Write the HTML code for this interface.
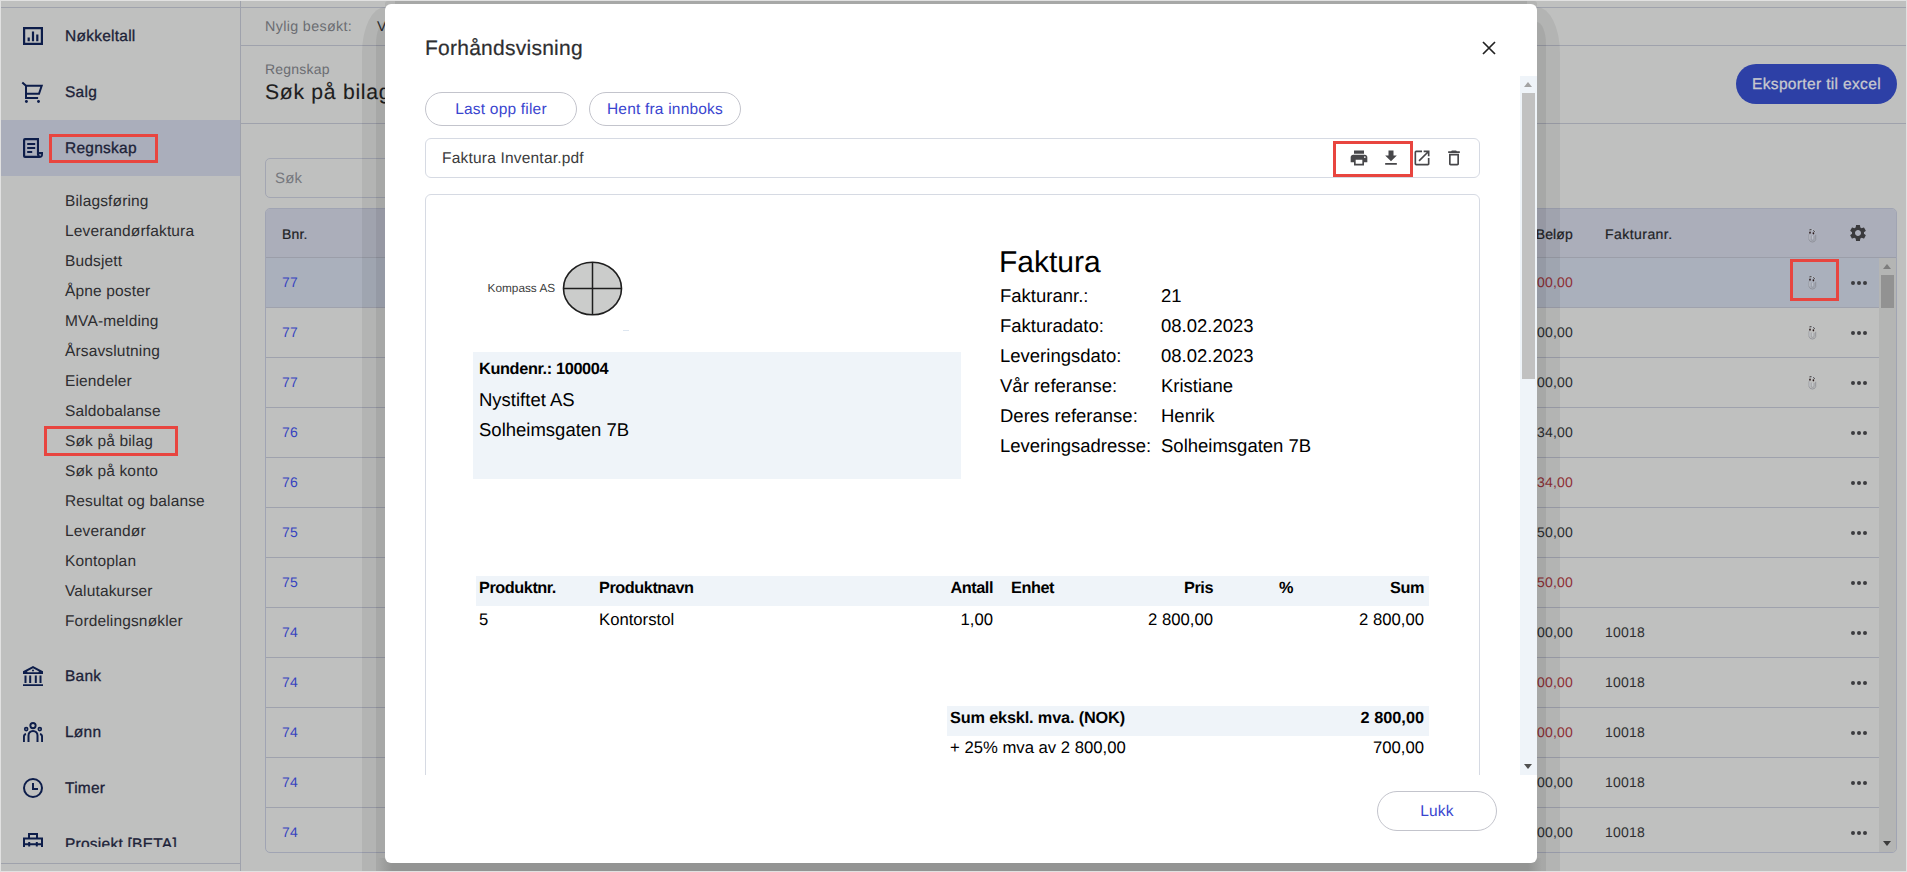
<!DOCTYPE html>
<html lang="no">
<head>
<meta charset="utf-8">
<title>Søk på bilag</title>
<style>
*{box-sizing:border-box;margin:0;padding:0}
html,body{width:1907px;height:872px;overflow:hidden}
body{text-rendering:geometricPrecision;position:relative;background:#bfc0bf;font-family:"Liberation Sans",sans-serif;color:#2a2a2c;font-size:15px}
.abs{position:absolute}
#frame{position:absolute;left:0;top:0;width:1907px;height:872px;border:1px solid #e1e1e1;z-index:50;pointer-events:none}
/* ---------- sidebar ---------- */
#side{position:absolute;left:1px;top:0;width:240px;height:871px;border-right:1px solid #9fa2ac}
#sidein{position:absolute;left:0;top:0;width:239px;height:847px;overflow:hidden}
.topline{position:absolute;left:1px;top:7px;width:1905px;height:1px;background:#9fa2ac}
.botline{position:absolute;left:1px;top:863px;width:240px;height:1px;background:#9fa2ac}
.nav{position:absolute;left:0;width:239px;height:56px}
.nav.on{background:#aaaebb}
.nav span{position:absolute;left:64px;top:19px;font-size:15.500px;line-height:20px;color:#1c2238;font-weight:400;letter-spacing:.25px;-webkit-text-stroke:.3px #1c2238;white-space:nowrap}
.nav svg{position:absolute;left:19px;top:16px;width:24px;height:24px;fill:#0d1d4a}
.sub{position:absolute;left:64px;font-size:15.500px;line-height:20px;color:#2d2d30;white-space:nowrap;letter-spacing:.15px}
.redbox{position:absolute;border:3px solid #e8453f}
/* ---------- main ---------- */
#main{position:absolute;left:241px;top:0;width:1665px;height:871px}
.hline{position:absolute;left:0;width:1665px;height:1px;background:#9fa2ac}
.recent{position:absolute;left:24px;top:18px;font-size:14.300px;line-height:18px;color:#6b6d72;letter-spacing:.35px;white-space:nowrap}
.crumb{position:absolute;left:24px;top:60px;font-size:14px;line-height:18px;color:#6b6d72;letter-spacing:.2px}
.h1{position:absolute;left:24px;top:80px;font-size:21.200px;line-height:26px;color:#1d1d20;letter-spacing:.7px;-webkit-text-stroke:.12px #1d1d20;white-space:nowrap}
.export{position:absolute;left:1495px;top:64px;width:161px;height:40px;border-radius:20px;background:#2d40a6;color:#c8c9cf;font-size:15.500px;line-height:42px;text-align:center;letter-spacing:.35px;-webkit-text-stroke:.3px #c8c9cf}
.search{position:absolute;left:24px;top:158px;width:300px;height:40px;border:1px solid #a3a6b2;border-radius:5px}
.search span{position:absolute;left:9px;top:10px;font-size:15px;line-height:20px;color:#76787e;letter-spacing:.2px}
/* table */
#tbl{position:absolute;left:24px;top:208px;width:1632px;height:645px;border:1px solid #a0a4b3;border-radius:5px;overflow:hidden}
.thead{position:absolute;left:0;top:0;width:1630px;height:49px;background:#abaeba;border-bottom:1px solid #9b9ea9}
.th{position:absolute;top:15px;font-size:14px;line-height:20px;color:#202124;-webkit-text-stroke:.2px #202124;letter-spacing:.15px}
.row{position:absolute;left:0;width:1613px;height:50px;border-bottom:1px solid #9fa2ad}
.row.hl{background:#aab0bc}
.row .b{position:absolute;left:16px;top:14px;font-size:14px;line-height:20px;color:#3643c0;letter-spacing:.2px}
.row .amt{white-space:nowrap;position:absolute;left:1207px;width:100px;text-align:right;top:14px;font-size:14px;line-height:20px;color:#2d2d30;letter-spacing:.2px}
.row .amt.neg{color:#8f2f36}
.row .f{position:absolute;left:1339px;top:14px;font-size:14px;line-height:20px;color:#2d2d30;letter-spacing:.2px}
.dots{position:absolute;left:1584.700px;top:22.800px;width:18px;height:6px}
.dots i{position:absolute;top:0;width:4.4px;height:4.4px;border-radius:50%;background:#3b3b3f}
.clip{position:absolute;left:1542.300px;top:16.500px;width:9px;height:15px}
.vscroll{position:absolute;left:1613px;top:49px;width:17px;height:594px;background:#b4b5b4}

.gear{position:absolute;left:1582px;top:14px;width:20px;height:20px;fill:#3a3a3d}
.vscroll .thumb{position:absolute;left:2px;top:17px;width:13px;height:33px;background:#929292}
.arr{position:absolute;left:4px;width:0;height:0;border-left:4.500px solid transparent;border-right:4.500px solid transparent}
.arr.up{top:6px;border-bottom:5px solid #7d7d7d}
.arr.down{bottom:6px;border-top:5px solid #3c3c3c}
#dl{position:absolute;left:0;top:0;width:1907px;height:872px}
.dtitle{position:absolute;left:425px;top:36px;font-size:21px;line-height:26px;color:#2e2e30;letter-spacing:.25px;-webkit-text-stroke:.2px #2e2e30;white-space:nowrap}
.xclose{position:absolute;left:1482px;top:41px;width:14px;height:14px}
.pill{position:absolute;border:1px solid #c3c4cc;border-radius:17px;text-align:center;color:#3a45cf;font-size:15.500px;letter-spacing:.2px;white-space:nowrap;background:#fff}
.filerow{position:absolute;left:425px;top:138px;width:1055px;height:40px;border:1px solid #d6dae3;border-radius:6px}
.filerow span{position:absolute;left:16px;top:10px;font-size:15.500px;line-height:20px;color:#3b3b3d;letter-spacing:.2px;white-space:nowrap}
.mi{position:absolute;top:9px;width:20px;height:20px;fill:#47474a}
#pv{position:absolute;left:385px;top:76px;width:1135px;height:699px;overflow:hidden}
#pv>*{margin-left:-385px;margin-top:-76px}
.pdfbox{position:absolute;left:425px;top:194px;width:1055px;height:700px;border:1px solid #d6dae3;border-radius:6px}
.pt{position:absolute;font-family:"Liberation Sans",sans-serif;color:#000;white-space:nowrap;line-height:1.150}
.pt.b{font-weight:700;font-size:16.300px;letter-spacing:-.45px}
.pt.s{font-size:16.700px}
.pt.b.s{font-size:16.300px}
.pt.r{width:100px;text-align:right}
.dscroll{position:absolute;left:1520px;top:76px;width:17px;height:699px;background:#eff4f9}
.dscroll .thumb{position:absolute;left:2px;width:13px}
/* ---------- dialog ---------- */
#dlg{position:absolute;left:385px;top:4px;width:1152px;height:859px;background:#fff;border-radius:6px}
.sh{position:absolute;background:rgba(0,0,0,.062)}
</style>
</head>
<body>
<div class="topline"></div>
<div id="side">
<div id="sidein">
<div class="nav" style="top:8px"><svg viewBox="0 0 24 24"><path fill-rule="evenodd" d="M3 3h20v18H3zM5.2 5.2v13.6h15.6V5.2zM7.6 13.4h2.2v3.8H7.6zM11.9 7.6h2.2v9.6h-2.2zM16.2 10.4h2.2v6.8h-2.2z"/></svg><span>Nøkkeltall</span></div>
<div class="nav" style="top:64px"><svg viewBox="0 0 24 24"><path d="M2.300 2.500L6 5.800V18h12.100M5 5.800h16.700L19 13.800H6" fill="none" stroke="#0d1d4a" stroke-width="2"/><circle cx="6.400" cy="21.500" r="1.450"/><circle cx="18.500" cy="21.500" r="1.450"/></svg><span>Salg</span></div>
<div class="nav on" style="top:120px"><svg style="top:15px" viewBox="0 0 24 24"><path fill-rule="evenodd" d="M3 5a2 2 0 0 1 2-2h14v14h4v2.2A3.8 3.8 0 0 1 19.2 23H5a2 2 0 0 1-2-2zm2.2 0.200v15.600h12.200a3.800 3.800 0 0 1-.5-1.800V5.200zM19 19.2v.1a1.500 1.500 0 0 0 2 1.200 1.600 1.600 0 0 0 .1-1.300z"/><path d="M7.200 8h8v1.900h-8zM7.200 12h8v1.900h-8zM7.200 16h5v1.900h-5z"/></svg><span>Regnskap</span></div>
<div class="redbox" style="left:48px;top:134px;width:109px;height:29px"></div>
<div class="sub" style="top:192px">Bilagsføring</div>
<div class="sub" style="top:222px">Leverandørfaktura</div>
<div class="sub" style="top:252px">Budsjett</div>
<div class="sub" style="top:282px">Åpne poster</div>
<div class="sub" style="top:312px">MVA-melding</div>
<div class="sub" style="top:342px">Årsavslutning</div>
<div class="sub" style="top:372px">Eiendeler</div>
<div class="sub" style="top:402px">Saldobalanse</div>
<div class="sub" style="top:432px">Søk på bilag</div>
<div class="sub" style="top:462px">Søk på konto</div>
<div class="sub" style="top:492px">Resultat og balanse</div>
<div class="sub" style="top:522px">Leverandør</div>
<div class="sub" style="top:552px">Kontoplan</div>
<div class="sub" style="top:582px">Valutakurser</div>
<div class="sub" style="top:612px">Fordelingsnøkler</div>
<div class="redbox" style="left:43px;top:426px;width:134px;height:30px"></div>
<div class="nav" style="top:648px"><svg viewBox="0 0 24 24"><path fill-rule="evenodd" d="M13 2l10 5.300V10H3V7.300zM13 4.300L7.400 7.300a.5.5 0 0 0 .2.900h10.800a.5.500 0 0 0 .2-.9zM12 6.600a1 1 0 1 0 2 0 1 1 0 0 0-2 0z"/><path d="M4.500 11.500h2v7.500h-2zM9.200 11.500h2v7.500h-2zM14.800 11.500h2v7.500h-2zM19.500 11.500h2v7.500h-2zM3 20.300h20V22H3z"/></svg><span>Bank</span></div>
<div class="nav" style="top:704px"><svg viewBox="0 0 24 24"><path fill-rule="evenodd" d="M13 2a3.600 3.600 0 1 1 0 7.200A3.600 3.600 0 0 1 13 2zm0 1.900a1.700 1.700 0 1 0 0 3.400 1.700 1.700 0 0 0 0-3.400zM6.200 6.800a2.300 2.300 0 1 1 0 4.600 2.300 2.300 0 0 1 0-4.600zm0 1.600a.7.700 0 1 0 0 1.400.7.700 0 0 0 0-1.400zM19.800 6.800a2.300 2.300 0 1 1 0 4.600 2.300 2.300 0 0 1 0-4.600zm0 1.600a.7.700 0 1 0 0 1.400.7.700 0 0 0 0-1.400z"/><path d="M7.500 22v-6.500a5.500 5.500 0 0 1 11 0V22h-2v-6.500a3.500 3.500 0 0 0-7 0V22zM3 22v-5.500a3.500 3.500 0 0 1 2.800-3.400l.4 1.900A1.600 1.600 0 0 0 4.900 16.500V22zM23 22v-5.500a3.500 3.500 0 0 0-2.800-3.400l-.4 1.900a1.600 1.600 0 0 1 1.300 1.500V22z"/></svg><span>Lønn</span></div>
<div class="nav" style="top:760px"><svg viewBox="0 0 24 24"><path fill-rule="evenodd" d="M13 2a10 10 0 1 1 0 20 10 10 0 0 1 0-20zm0 2a8 8 0 1 0 0 16 8 8 0 0 0 0-16z"/><path d="M12 7h2v5h4v2h-6z"/></svg><span>Timer</span></div>
<div class="nav" style="top:816px"><svg style="top:15px" viewBox="0 0 24 24"><path fill-rule="evenodd" d="M8 2h10v4.500h5V22H3V6.500h5zm2 2v2.500h6V4zM5 8.500v3.700h3.200v-1.200h2v1.200h5.600v-1.200h2v1.200H21V8.500zM5 14.200V20h16v-5.800h-3.200v1.300h-2v-1.300h-5.600v1.300h-2v-1.300z"/></svg><span>Prosjekt [BETA]</span></div>
</div>
</div>
<div class="botline"></div>
<div id="main">
<div class="recent">Nylig besøkt:</div><div class="recent" style="left:136px;color:#2d2d30">Valutakurser</div>
<div class="hline" style="top:45px"></div>
<div class="crumb">Regnskap</div>
<div class="h1">Søk på bilag</div>
<div class="export">Eksporter til excel</div>
<div class="hline" style="top:123px"></div>
<div class="search"><span>Søk</span></div>
<div id="tbl">
<div class="thead"><span class="th" style="left:16px">Bnr.</span><span class="th" style="left:1240px;width:67px;text-align:right">Beløp</span><span class="th" style="left:1339px;letter-spacing:.45px">Fakturanr.</span>
<svg class="clip" style="top:18.700px" viewBox="0 0 9 15"><path d="M1.100 6.300V11.600a3.400 3.200 0 0 0 6.600 0V6.800" fill="none" stroke="#85888f" stroke-width=".75"/><path d="M3.100 7.600v3.500a1.500 1.400 0 0 0 3 0V7.900" fill="none" stroke="#8e9198" stroke-width=".7"/><path d="M1.700 3.200a3 2.600 0 0 1 5.600 .8" fill="none" stroke="#c4c7cf" stroke-width=".9"/><path d="M1.800 6.800v4.600M4.600 8v2.800" fill="none" stroke="#c9ccd3" stroke-width=".7"/><ellipse cx="2" cy="4.700" rx=".85" ry="1.150" fill="#2b1b1c"/><ellipse cx="5.400" cy="5.300" rx=".85" ry="1.150" fill="#2b1b1c"/><path d="M1.500 1.900l2-.2M5.300 2.500l1.500 1.100" stroke="#34302f" stroke-width="1" fill="none"/></svg>
<svg class="gear" viewBox="0 0 24 24"><path d="M19.140 12.940c.04-.3.060-.610.060-.940 0-.320-.020-.640-.070-.940l2.030-1.580a.490.490 0 0 0 .12-.610l-1.920-3.320a.488.488 0 0 0-.590-.220l-2.390.960c-.5-.380-1.030-.700-1.620-.940l-.360-2.540a.484.484 0 0 0-.480-.410h-3.840c-.240 0-.430.170-.470.410l-.360 2.540c-.590.240-1.130.570-1.620.940l-2.390-.960c-.220-.080-.470 0-.590.220L2.740 8.870c-.120.210-.080.470.120.610l2.030 1.580c-.050.300-.090.630-.090.940s.020.640.070.940l-2.030 1.580a.490.490 0 0 0-.12.610l1.920 3.320c.12.220.370.290.590.220l2.390-.960c.5.380 1.030.700 1.620.940l.360 2.540c.050.240.240.410.480.410h3.840c.240 0 .440-.170.470-.410l.360-2.540c.590-.240 1.130-.560 1.620-.940l2.390.960c.220.080.470 0 .590-.220l1.920-3.320c.120-.220.070-.470-.120-.610l-2.010-1.580zM12 15.600c-1.980 0-3.600-1.620-3.600-3.600s1.620-3.600 3.600-3.600 3.600 1.620 3.600 3.600-1.620 3.600-3.600 3.600z"/></svg>
</div>
<div class="row hl" style="top:49px"><span class="b">77</span><span class="amt neg">-2 800,00</span><span class="f"></span><svg class="clip" viewBox="0 0 9 15"><path d="M1.100 6.300V11.600a3.400 3.200 0 0 0 6.600 0V6.800" fill="none" stroke="#85888f" stroke-width=".75"/><path d="M3.100 7.600v3.500a1.500 1.400 0 0 0 3 0V7.900" fill="none" stroke="#8e9198" stroke-width=".7"/><path d="M1.700 3.200a3 2.600 0 0 1 5.600 .8" fill="none" stroke="#c4c7cf" stroke-width=".9"/><path d="M1.800 6.800v4.600M4.600 8v2.800" fill="none" stroke="#c9ccd3" stroke-width=".7"/><ellipse cx="2" cy="4.700" rx=".85" ry="1.150" fill="#2b1b1c"/><ellipse cx="5.400" cy="5.300" rx=".85" ry="1.150" fill="#2b1b1c"/><path d="M1.500 1.900l2-.2M5.300 2.500l1.500 1.100" stroke="#34302f" stroke-width="1" fill="none"/></svg><div class="dots"><i style="left:0"></i><i style="left:6.100px"></i><i style="left:12.200px"></i></div></div>
<div class="row" style="top:99px"><span class="b">77</span><span class="amt">2 800,00</span><span class="f"></span><svg class="clip" viewBox="0 0 9 15"><path d="M1.100 6.300V11.600a3.400 3.200 0 0 0 6.600 0V6.800" fill="none" stroke="#85888f" stroke-width=".75"/><path d="M3.100 7.600v3.500a1.500 1.400 0 0 0 3 0V7.900" fill="none" stroke="#8e9198" stroke-width=".7"/><path d="M1.700 3.200a3 2.600 0 0 1 5.600 .8" fill="none" stroke="#c4c7cf" stroke-width=".9"/><path d="M1.800 6.800v4.600M4.600 8v2.800" fill="none" stroke="#c9ccd3" stroke-width=".7"/><ellipse cx="2" cy="4.700" rx=".85" ry="1.150" fill="#2b1b1c"/><ellipse cx="5.400" cy="5.300" rx=".85" ry="1.150" fill="#2b1b1c"/><path d="M1.500 1.900l2-.2M5.300 2.500l1.500 1.100" stroke="#34302f" stroke-width="1" fill="none"/></svg><div class="dots"><i style="left:0"></i><i style="left:6.100px"></i><i style="left:12.200px"></i></div></div>
<div class="row" style="top:149px"><span class="b">77</span><span class="amt">3 500,00</span><span class="f"></span><svg class="clip" viewBox="0 0 9 15"><path d="M1.100 6.300V11.600a3.400 3.200 0 0 0 6.600 0V6.800" fill="none" stroke="#85888f" stroke-width=".75"/><path d="M3.100 7.600v3.500a1.500 1.400 0 0 0 3 0V7.900" fill="none" stroke="#8e9198" stroke-width=".7"/><path d="M1.700 3.200a3 2.600 0 0 1 5.600 .8" fill="none" stroke="#c4c7cf" stroke-width=".9"/><path d="M1.800 6.800v4.600M4.600 8v2.800" fill="none" stroke="#c9ccd3" stroke-width=".7"/><ellipse cx="2" cy="4.700" rx=".85" ry="1.150" fill="#2b1b1c"/><ellipse cx="5.400" cy="5.300" rx=".85" ry="1.150" fill="#2b1b1c"/><path d="M1.500 1.900l2-.2M5.300 2.500l1.500 1.100" stroke="#34302f" stroke-width="1" fill="none"/></svg><div class="dots"><i style="left:0"></i><i style="left:6.100px"></i><i style="left:12.200px"></i></div></div>
<div class="row" style="top:199px"><span class="b">76</span><span class="amt">1 434,00</span><span class="f"></span><div class="dots"><i style="left:0"></i><i style="left:6.100px"></i><i style="left:12.200px"></i></div></div>
<div class="row" style="top:249px"><span class="b">76</span><span class="amt neg">-1 434,00</span><span class="f"></span><div class="dots"><i style="left:0"></i><i style="left:6.100px"></i><i style="left:12.200px"></i></div></div>
<div class="row" style="top:299px"><span class="b">75</span><span class="amt">250,00</span><span class="f"></span><div class="dots"><i style="left:0"></i><i style="left:6.100px"></i><i style="left:12.200px"></i></div></div>
<div class="row" style="top:349px"><span class="b">75</span><span class="amt neg">-250,00</span><span class="f"></span><div class="dots"><i style="left:0"></i><i style="left:6.100px"></i><i style="left:12.200px"></i></div></div>
<div class="row" style="top:399px"><span class="b">74</span><span class="amt">12 500,00</span><span class="f">10018</span><div class="dots"><i style="left:0"></i><i style="left:6.100px"></i><i style="left:12.200px"></i></div></div>
<div class="row" style="top:449px"><span class="b">74</span><span class="amt neg">-2 500,00</span><span class="f">10018</span><div class="dots"><i style="left:0"></i><i style="left:6.100px"></i><i style="left:12.200px"></i></div></div>
<div class="row" style="top:499px"><span class="b">74</span><span class="amt neg">-10 000,00</span><span class="f">10018</span><div class="dots"><i style="left:0"></i><i style="left:6.100px"></i><i style="left:12.200px"></i></div></div>
<div class="row" style="top:549px"><span class="b">74</span><span class="amt">2 500,00</span><span class="f">10018</span><div class="dots"><i style="left:0"></i><i style="left:6.100px"></i><i style="left:12.200px"></i></div></div>
<div class="row" style="top:599px"><span class="b">74</span><span class="amt">10 000,00</span><span class="f">10018</span><div class="dots"><i style="left:0"></i><i style="left:6.100px"></i><i style="left:12.200px"></i></div></div>
<div class="vscroll"><div class="arr up"></div><div class="thumb"></div><div class="arr down"></div></div>
</div>
<div class="redbox" style="left:1549px;top:259px;width:49px;height:42px"></div>
</div>
<div class="sh" style="left:362px;top:7px;width:1198px;height:864px;border-radius:23px 23px 0 0/46px 46px 0 0"></div>
<div class="sh" style="left:376px;top:22px;width:1170px;height:849px;border-radius:9px 9px 0 0/22px 22px 0 0"></div>
<div class="sh" style="left:385px;top:1px;width:1152px;height:8px;border-radius:3px 3px 0 0"></div>
<div class="sh" style="left:395px;top:1px;width:1132px;height:8px"></div>
<div class="abs" style="left:378px;top:858px;width:1164px;height:13px;background:linear-gradient(90deg,rgba(147,148,147,0),#939493 14px,#939493 1150px,rgba(147,148,147,0))"></div>
<div id="dlg"></div>
<div id="dl">
<div class="dtitle">Forhåndsvisning</div>
<svg class="xclose" viewBox="0 0 14 14"><path d="M1 1l12 12M13 1L1 13" stroke="#222" stroke-width="1.700" fill="none"/></svg>
<div class="pill" style="left:425px;top:92px;width:152px;height:34px;line-height:34px">Last opp filer</div>
<div class="pill" style="left:589px;top:92px;width:152px;height:34px;line-height:34px">Hent fra innboks</div>
<div class="filerow"><span>Faktura Inventar.pdf</span>
<svg class="mi" style="left:923px" viewBox="0 0 24 24"><path d="M19 8H5c-1.660 0-3 1.340-3 3v6h4v4h12v-4h4v-6c0-1.660-1.340-3-3-3zm-3 11H8v-5h8v5zm3-7c-.550 0-1-.450-1-1s.450-1 1-1 1 .450 1 1-.450 1-1 1zm-1-9H6v4h12V3z"/></svg>
<svg class="mi" style="left:955px" viewBox="0 0 24 24"><path d="M19 9h-4V3H9v6H5l7 7 7-7zM5 18v2h14v-2H5z"/></svg>
<svg class="mi" style="left:986px" viewBox="0 0 24 24"><path d="M19 19H5V5h7V3H5a2 2 0 0 0-2 2v14a2 2 0 0 0 2 2h14c1.100 0 2-.9 2-2v-7h-2v7zM14 3v2h3.590l-9.830 9.830 1.410 1.410L19 6.410V10h2V3h-7z"/></svg>
<svg class="mi" style="left:1018px" viewBox="0 0 24 24"><path d="M16 9v10H8V9h8m-1.500-6h-5l-1 1H5v2h14V4h-3.500l-1-1zM18 7H6v12c0 1.100.9 2 2 2h8c1.100 0 2-.9 2-2V7z"/></svg>
</div>
<div class="redbox" style="left:1333px;top:141px;width:80px;height:36px"></div>
<div id="pv">
<div class="pdfbox"></div>
<span class="pt" style="left:487.600px;top:282px;font-size:11.800px;color:#3c3c3c">Kompass AS</span>
<div class="abs" style="left:623px;top:330px;width:6px;height:1px;background:#dde6f0"></div>
<svg class="abs" style="left:562px;top:261px;width:61px;height:55px" viewBox="0 0 61 55"><ellipse cx="30.500" cy="27.500" rx="29" ry="26.300" fill="#cbcccb" stroke="#1e1e1e" stroke-width="1.600"/><path d="M30.500 1.200v52.600M1.500 27.500h58" stroke="#1e1e1e" stroke-width="1.500" fill="none"/></svg>
<div class="abs" style="left:473px;top:352px;width:488px;height:127px;background:#eff4f9"></div>
<span class="pt b" style="left:479px;top:360px;letter-spacing:-.35px">Kundenr.: 100004</span>
<span class="pt" style="left:479px;top:389px;font-size:18.500px">Nystiftet AS</span>
<span class="pt" style="left:479px;top:419px;font-size:18.500px">Solheimsgaten 7B</span>
<span class="pt" style="left:999px;top:246px;font-size:30px">Faktura</span>
<span class="pt" style="left:1000px;top:285px;font-size:18.500px">Fakturanr.:</span><span class="pt" style="left:1161px;top:285px;font-size:18.500px">21</span>
<span class="pt" style="left:1000px;top:315px;font-size:18.500px">Fakturadato:</span><span class="pt" style="left:1161px;top:315px;font-size:18.500px">08.02.2023</span>
<span class="pt" style="left:1000px;top:345px;font-size:18.500px">Leveringsdato:</span><span class="pt" style="left:1161px;top:345px;font-size:18.500px">08.02.2023</span>
<span class="pt" style="left:1000px;top:375px;font-size:18.500px">Vår referanse:</span><span class="pt" style="left:1161px;top:375px;font-size:18.500px">Kristiane</span>
<span class="pt" style="left:1000px;top:405px;font-size:18.500px">Deres referanse:</span><span class="pt" style="left:1161px;top:405px;font-size:18.500px">Henrik</span>
<span class="pt" style="left:1000px;top:435px;font-size:18.500px">Leveringsadresse:</span><span class="pt" style="left:1161px;top:435px;font-size:18.500px">Solheimsgaten 7B</span>
<div class="abs" style="left:476px;top:576px;width:953px;height:30px;background:#eff4f9"></div>
<span class="pt b s" style="left:479px;top:579px">Produktnr.</span>
<span class="pt b s" style="left:599px;top:579px">Produktnavn</span>
<span class="pt b s r" style="left:893px;top:579px">Antall</span>
<span class="pt b s" style="left:1011px;top:579px">Enhet</span>
<span class="pt b s r" style="left:1113px;top:579px">Pris</span>
<span class="pt b s" style="left:1279px;top:579px">%</span>
<span class="pt b s r" style="left:1324px;top:579px">Sum</span>
<span class="pt s" style="left:479px;top:610px">5</span>
<span class="pt s" style="left:599px;top:610px">Kontorstol</span>
<span class="pt s r" style="left:893px;top:610px">1,00</span>
<span class="pt s r" style="left:1113px;top:610px">2 800,00</span>
<span class="pt s r" style="left:1324px;top:610px">2 800,00</span>
<div class="abs" style="left:947px;top:706px;width:482px;height:30px;background:#eff4f9"></div>
<span class="pt b s" style="left:950px;top:709px;letter-spacing:-.16px">Sum ekskl. mva. (NOK)</span>
<span class="pt b s r" style="left:1324px;top:709px;letter-spacing:0">2 800,00</span>
<span class="pt s" style="left:950px;top:738px">+ 25% mva av 2 800,00</span>
<span class="pt s r" style="left:1324px;top:738px">700,00</span>
</div>
<div class="dscroll"><div class="arr up" style="border-bottom-color:#a3a3a3"></div><div class="thumb" style="top:17px;height:286px;background:#c1c1c1"></div><div class="arr down" style="border-top-color:#505050"></div></div>
<div class="pill" style="left:1377px;top:791px;width:120px;height:40px;line-height:40px;border-radius:20px">Lukk</div>
</div>
<div id="frame"></div>
</body>
</html>
